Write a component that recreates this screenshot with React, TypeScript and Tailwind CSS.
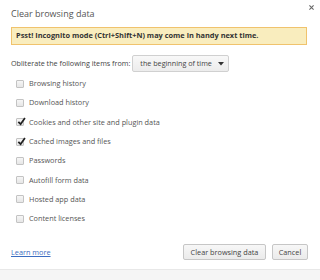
import React from "react";

const items: { label: string; checked: boolean }[] = [
  { label: "Browsing history", checked: false },
  { label: "Download history", checked: false },
  { label: "Cookies and other site and plugin data", checked: true },
  { label: "Cached images and files", checked: true },
  { label: "Passwords", checked: false },
  { label: "Autofill form data", checked: false },
  { label: "Hosted app data", checked: false },
  { label: "Content licenses", checked: false },
];

function Box({ checked }: { checked: boolean }) {
  return (
    <div className="relative w-[8px] h-[8px] border border-[#c3c3c3] rounded-[1px] bg-gradient-to-b from-[#f6f6f6] to-[#e6e6e6] shrink-0">
      {checked && (
        <svg viewBox="0 0 10 10" className="absolute left-[0px] top-[-2px] w-[9px] h-[9px]">
          <path d="M1.5 5.5 L4 8 L8.8 1" fill="none" stroke="#222" strokeWidth="2" />
        </svg>
      )}
    </div>
  );
}

export default function App() {
  return (
    <div
      className="w-[320px] h-[280px] bg-white flex flex-col relative overflow-hidden text-[#444]"
      style={{ fontFamily: '"Open Sans", "Noto Sans", sans-serif' }}
    >
      <button className="absolute left-[308px] top-[4px] w-[7px] h-[7px] flex items-center justify-center">
        <svg viewBox="0 0 6 6" className="w-[5px] h-[5px]">
          <path d="M0.5 0.5 L5.5 5.5 M5.5 0.5 L0.5 5.5" stroke="#666" strokeWidth="1.3" />
        </svg>
      </button>
      <div className="pl-[11px] pt-[7px] h-[27px] text-[9px] leading-[13px] text-[#555]">
        Clear browsing data
      </div>
      <div className="ml-[11px] mr-[13px] h-[18px] bg-[#f9edbe] border border-[#f0c36d] flex items-center pl-[4px] text-[7.4px] font-bold text-[#333]">
        Psst! Incognito mode (Ctrl+Shift+N) may come in handy next time.
      </div>
      <div className="mt-[10px] ml-[11px] flex items-center h-[17px] text-[7.2px]">
        <span className="text-[#444]">Obliterate the following items from:</span>
        <div className="ml-[2px] w-[97px] h-[17px] border border-[#d0d0d0] rounded-[2px] bg-gradient-to-b from-[#f8f8f8] to-[#ececec] flex items-center pl-[7px] pr-[4px] text-[#444]">
          <span className="flex-1">the beginning of time</span>
          <svg viewBox="0 0 6 4" className="w-[6px] h-[4px]">
            <path d="M0 0 L6 0 L3 3.5 Z" fill="#333" />
          </svg>
        </div>
      </div>
      <div className="mt-[2px] flex flex-col">
        {items.map((it) => (
          <div key={it.label} className="h-[19.3px] flex items-center pl-[16px] text-[7.3px] text-[#555]">
            <Box checked={it.checked} />
            <span className="ml-[5px]">{it.label}</span>
          </div>
        ))}
      </div>
      <div className="mt-[16px] flex items-center h-[16px] pl-[11px] pr-[12px] text-[7.3px]">
        <a className="text-[#3b6cc0] underline flex-1">Learn more</a>
        <button className="w-[83px] h-[16px] border border-[#c6c6c6] rounded-[2px] bg-gradient-to-b from-[#f7f7f7] to-[#ebebeb] text-[#444]">
          Clear browsing data
        </button>
        <button className="ml-[6px] w-[36px] h-[16px] border border-[#c6c6c6] rounded-[2px] bg-gradient-to-b from-[#f7f7f7] to-[#ebebeb] text-[#444]">
          Cancel
        </button>
      </div>
      <div className="absolute left-0 right-0 top-[269px] bottom-0 bg-[#f5f5f5] border-t border-[#e8e8e8]" />
    </div>
  );
}
